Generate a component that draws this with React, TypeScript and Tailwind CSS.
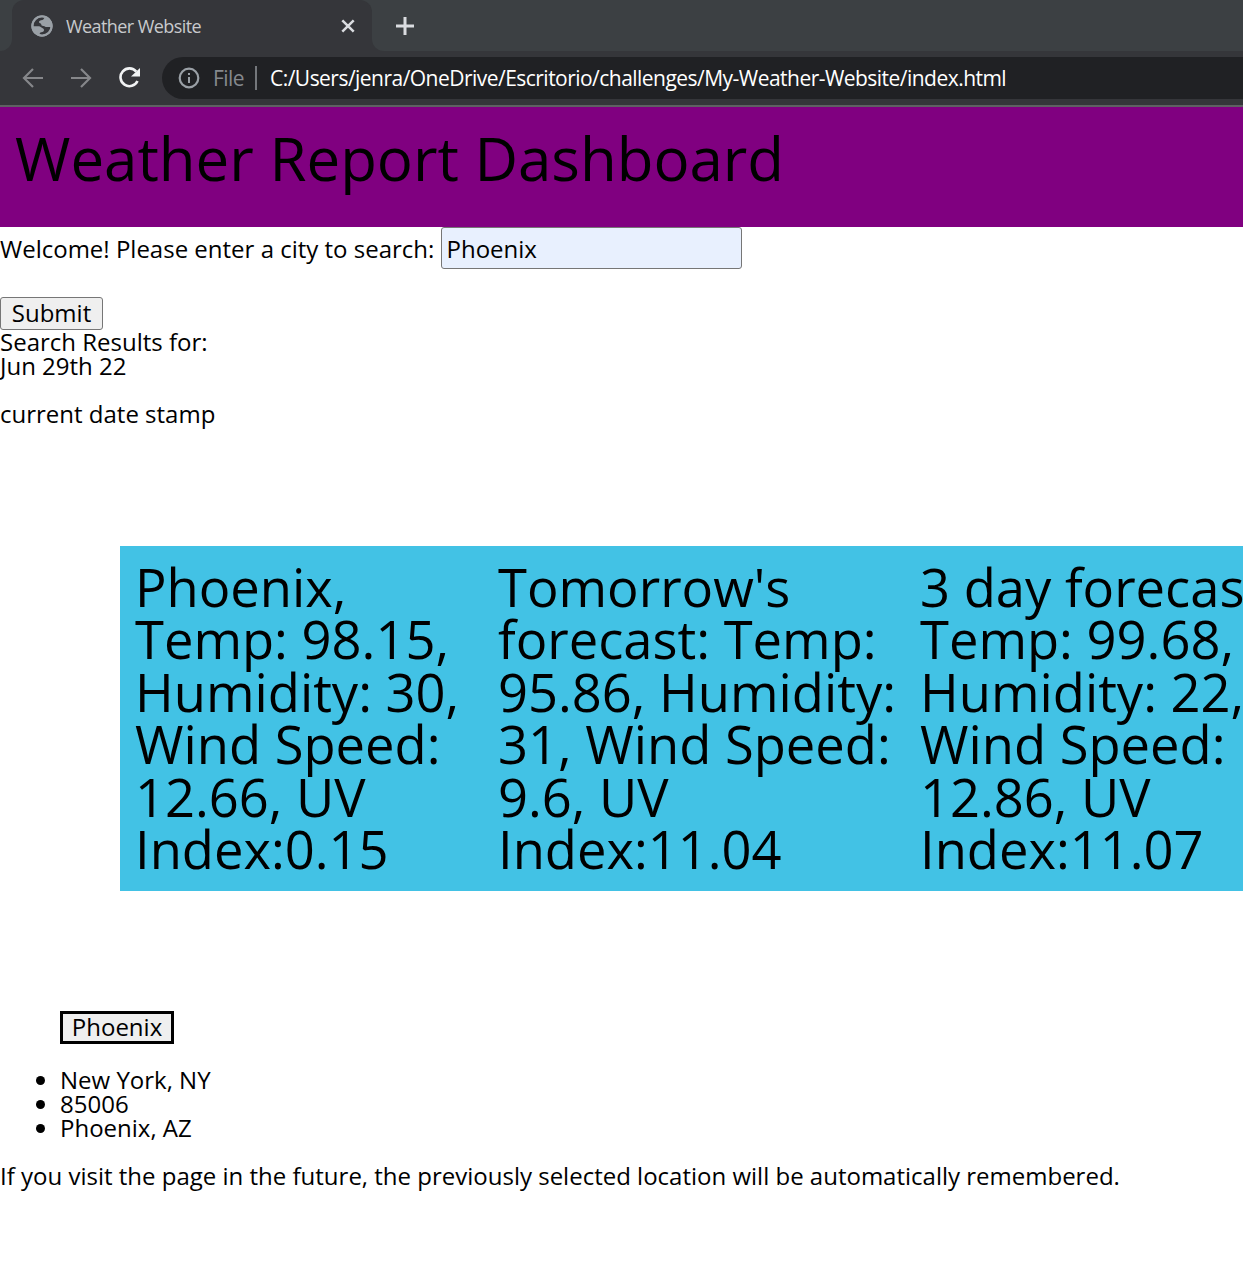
const forecasts = [
  { width: "w-[363px]", lines: ["Phoenix,", "Temp: 98.15,", "Humidity: 30,", "Wind Speed:", "12.66, UV", "Index:0.15"] },
  { width: "w-[422px]", lines: ["Tomorrow's", "forecast: Temp:", "95.86, Humidity:", "31, Wind Speed:", "9.6, UV", "Index:11.04"] },
  { width: "w-[422px]", lines: ["3 day forecast:", "Temp: 99.68,", "Humidity: 22,", "Wind Speed:", "12.86, UV", "Index:11.07"] },
];

function BrowserChrome() {
  return (
    <div className="h-[107px] border-b-2 border-[#5f6063] bg-[#35363a] font-['Open_Sans',sans-serif]">
      <div className="flex h-[51px] bg-[#3c4043]">
        <div className="w-3 bg-[#35363a]">
          <div className="h-full rounded-br-xl bg-[#3c4043]" />
        </div>
        <div className="flex w-[360px] items-center rounded-t-xl bg-[#35363a] pl-[18px]">
          <svg className="size-6 shrink-0" viewBox="0 0 24 24">
            <circle cx="12" cy="12" r="10.6" fill="#9aa0a6" />
            <path d="M15 3.500c-1.200.5-1 2.200-2.600 2.500-2 .3-3.600.7-3.400 2.200.2 1.200 2.300 1 2.300 2.300 0 1.100 1 1.500 2.200 1.400 1.300 0 1.700 1.200 2.800 1.200h4.500c-.4 4.400-4 7.700-8.400 7.800l-2.600-.5c-.3-1.300.2-2 1.500-2.200 1.800-.2 2.700-1 2.700-2.300 0-1.400-1.600-1.300-2.500-2.300-1-1.100-2-1.300-3.500-1.300H3.300C3.200 7.200 7.200 3 12 3z" fill="#35363a" />
            <circle cx="12" cy="12" r="9.600" fill="none" stroke="#9aa0a6" strokeWidth="2.200" />
          </svg>
          <span className="ml-3 w-[275px] whitespace-nowrap text-lg leading-6 tracking-[-0.58px] text-[#c8cacd]">Weather Website</span>
          <svg className="size-3.5 shrink-0" viewBox="0 0 14 14" stroke="#dadce0" strokeWidth="2.500"><path d="M1.300 1.300l11.400 11.400M12.700 1.300L1.300 12.700" /></svg>
        </div>
        <div className="flex flex-1 bg-[#35363a]">
          <div className="flex flex-1 items-center rounded-bl-xl bg-[#3c4043] pl-6">
            <svg className="size-[18px]" viewBox="0 0 18 18" stroke="#dadce0" strokeWidth="3"><path d="M9 0v18M0 9h18" /></svg>
          </div>
        </div>
      </div>
      <div className="flex h-[54px] items-center">
        <svg className="ml-[22px] h-5 w-[22px]" viewBox="0 0 22 20" fill="none" stroke="#86878a" strokeWidth="2.200"><path d="M21 10H2.500M11 1L2 10l9 9" /></svg>
        <svg className="ml-[26px] h-5 w-[22px]" viewBox="0 0 22 20" fill="none" stroke="#86878a" strokeWidth="2.200"><path d="M1 10h18.500M11 1l9 9-9 9" /></svg>
        <svg className="ml-[27px] size-[22px]" viewBox="0 0 22 22"><path d="M17.300 4.600A8.900 8.900 0 1 0 18.500 14" fill="none" stroke="#f1f3f4" strokeWidth="2.600" /><path d="M21 1v8.500h-9z" fill="#f1f3f4" /></svg>
        <div className="ml-[21px] flex h-[42px] flex-1 items-center rounded-l-full bg-[#202124] pl-[16px] text-[21px] tracking-[-0.53px]">
          <svg className="size-[22px]" viewBox="0 0 22 22"><circle cx="11" cy="11" r="9.300" fill="none" stroke="#9aa0a6" strokeWidth="2.200" /><path d="M10 10h2v6h-2zM10 6h2v2h-2z" fill="#9aa0a6" /></svg>
          <span className="ml-[13px] w-[42px] text-[#85898e]">File</span>
          <span className="h-6 w-0.5 bg-[#74777b]" />
          <span className="ml-[13px] whitespace-nowrap text-white">C:/Users/jenra/OneDrive/Escritorio/challenges/My-Weather-Website/index.html</span>
        </div>
      </div>
    </div>
  );
}

export default function App() {
  return (
    <div className="h-[1281px] w-[1243px] overflow-hidden bg-white font-['Open_Sans',sans-serif] text-2xl leading-6 text-black">
      <BrowserChrome />
      <header className="h-[120px] bg-[#800080] px-[15px] pt-[21px] text-[60px] leading-[60px]">Weather Report Dashboard</header>
      <div className="flex h-[42px]">
        <label className="w-[441px] pt-[10px] whitespace-nowrap">Welcome! Please enter a city to search:</label>
        <div className="w-[301px] rounded-[3px] border border-[#767676] bg-[#e8f0fe] pt-[9px] pl-[4.500px]">Phoenix</div>
      </div>
      <button className="mt-7 flex h-[33px] w-[103px] justify-center rounded-[3px] border border-[#767676] bg-[#efefef] pt-[3px]">Submit</button>
      <p>Search Results for:</p>
      <p>Jun 29th 22</p>
      <p className="mt-6">current date stamp</p>
      <section className="mt-[120px] ml-[120px] flex h-[345px] w-[1300px] bg-[#42c2e5] pt-[15px] pl-[15px] text-[52.5px] leading-[52.5px]">
        {forecasts.map((f) => (
          <div key={f.lines[0]} className={f.width + " shrink-0"}>
            {f.lines.map((l) => <p key={l} className="whitespace-nowrap odd:h-[52px] even:h-[53px]">{l}</p>)}
          </div>
        ))}
      </section>
      <button className="mt-[120px] ml-[60px] flex h-[33px] w-[114px] justify-center border-[3px] border-black bg-[#efefef] pt-px">Phoenix</button>
      <ul className="mt-6 list-disc pl-[60px]">
        <li>New York, NY</li>
        <li>85006</li>
        <li>Phoenix, AZ</li>
      </ul>
      <p className="mt-6 whitespace-nowrap">If you visit the page in the future, the previously selected location will be automatically remembered.</p>
    </div>
  );
}
